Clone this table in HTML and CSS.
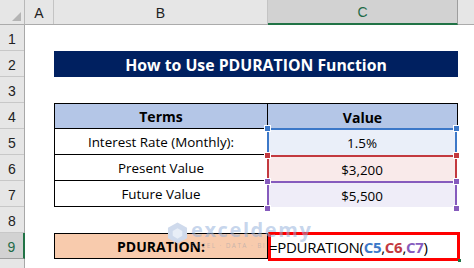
FILE: index.html
```html
<!DOCTYPE html>
<html>
<head>
<meta charset="utf-8">
<link rel="stylesheet" href="styles.css">
</head>
<body>
<div class="sheet">
  <div class="corner"><span class="tri"></span></div>
  <div class="colbar">
    <div class="colhdr col-a">A</div>
    <div class="colhdr col-b">B</div>
    <div class="colhdr col-c sel">C</div>
    <div class="colhdr col-rest"></div>
  </div>
  <div class="rowbar">
    <div class="rowhdr">1</div>
    <div class="rowhdr">2</div>
    <div class="rowhdr">3</div>
    <div class="rowhdr">4</div>
    <div class="rowhdr">5</div>
    <div class="rowhdr">6</div>
    <div class="rowhdr">7</div>
    <div class="rowhdr">8</div>
    <div class="rowhdr sel">9</div>
    <div class="rowhdr last"></div>
  </div>
  <div class="body">
    <div class="title">How to Use PDURATION Function</div>
    <div class="table">
      <div class="cell b head">Terms</div>
      <div class="cell c head">Value</div>
      <div class="cell b">Interest Rate (Monthly):</div>
      <div class="cell c ref r1"><span class="h tl"></span><span class="h tr"></span>1.5%</div>
      <div class="cell b">Present Value</div>
      <div class="cell c ref r2"><span class="h tl"></span><span class="h tr"></span>$3,200</div>
      <div class="cell b">Future Value</div>
      <div class="cell c ref r3"><span class="h tl"></span><span class="h tr"></span><span class="h bl"></span><span class="h br"></span>$5,500</div>
    </div>
    <div class="result">
      <div class="res-label">PDURATION:</div>
      <div class="res-formula"><span class="ftext">=PDURATION(<b class="k1">C5</b>,<b class="k2">C6</b>,<b class="k3">C7</b>)</span><span class="fill"></span></div>
    </div>
    <div class="watermark">
      <svg class="wm-icon" width="21" height="24" viewBox="0 0 22 24">
        <path d="M11 1 L21 6.5 L21 17.5 L11 23 L1 17.5 L1 6.5 Z" fill="#cfdaec"/>
        <path d="M11 7 L16 10 L16 15 L11 18 L6 15 L6 10 Z" fill="#e8eef7"/>
      </svg>
      <div class="wm-text">
        <div class="wm-name">exceldemy</div>
        <div class="wm-sub">EXCEL · DATA · BI</div>
      </div>
    </div>
  </div>
</div>
</body>
</html>
```

FILE: styles.css
```css
* { box-sizing: border-box; }
html, body { margin: 0; padding: 0; background: #ffffff; }
body { width: 474px; height: 268px; overflow: hidden; font-family: "Open Sans", "Liberation Sans", sans-serif; }

.sheet {
  display: grid;
  grid-template-columns: 25px 449px;
  grid-template-rows: 25px 243px;
  width: 474px;
  height: 268px;
}

.corner {
  background: #e6e6e6;
  border-right: 1px solid #b8b8b8;
  border-bottom: 1px solid #ababab;
  position: relative;
}
.tri {
  position: absolute;
  right: 3px;
  bottom: 3px;
  width: 0; height: 0;
  border-left: 9px solid transparent;
  border-bottom: 9px solid #b4b4b4;
}

.colbar {
  display: flex;
  background: #e6e6e6;
  border-bottom: 1px solid #ababab;
}
.colhdr {
  height: 24px;
  display: flex;
  align-items: center;
  justify-content: center;
  font-family: "Liberation Sans", Arial, sans-serif;
  font-size: 14px;
  color: #222;
  border-right: 1px solid #c4c4c4;
  padding-top: 1px;
}
.col-a { width: 29px; }
.col-b { width: 214px; }
.col-c { width: 190px; }
.col-rest { flex: 1; border-right: none; }
.colhdr.sel {
  background: #d2d2d2;
  color: #1e6b48;
  border-bottom: 2px solid #217346;
  border-right: 1px solid #9e9e9e;
  height: 25px;
  margin-bottom: -1px;
}

.rowbar {
  display: flex;
  flex-direction: column;
  background: #e6e6e6;
  border-right: 1px solid #a8a8a8;
}
.rowhdr {
  height: 26px;
  display: flex;
  align-items: center;
  justify-content: center;
  font-family: "Liberation Sans", Arial, sans-serif;
  font-size: 14px;
  color: #222;
  border-bottom: 1px solid #c8c8c8;
  padding-top: 3px;
}
.rowhdr.sel {
  background: #d2d2d2;
  color: #1e6b48;
  margin-right: -1px;
  border-right: 2px solid #217346;
  border-bottom: 1px solid #9e9e9e;
}
.rowhdr.last { flex: 1; border-bottom: none; }

.body {
  display: grid;
  grid-template-columns: 29px 214px 190px 16px;
  grid-template-rows: repeat(9, 26px) 1fr;
  position: relative;
  background: #fff;
}

.title {
  grid-column: 2 / 4;
  grid-row: 2;
  background: #002060;
  color: #fff;
  font-weight: 700;
  font-size: 15.8px;
  display: flex;
  align-items: center;
  justify-content: center;
  padding-top: 1px;
}

.table {
  grid-column: 2 / 4;
  grid-row: 4 / 8;
  display: grid;
  grid-template-columns: 214px 190px;
  grid-template-rows: repeat(4, 26px);
}
.cell {
  display: flex;
  align-items: center;
  justify-content: center;
  font-size: 13.4px;
  color: #000;
  position: relative;
  padding-top: 1px;
}
.cell.b {
  border-left: 1px solid #000;
  border-right: 1px solid #000;
  border-bottom: 1px solid #000;
}
.cell.head {
  background: #b4c6e7;
  font-weight: 700;
  font-size: 14px;
  border-top: 1px solid #000;
}
.cell.c.head {
  border-right: 1px solid #000;
  border-bottom: none;
}
.cell.ref { border-style: solid; border-width: 2px 2px 0 2px; margin-left: -1px; margin-right: 1px; }
.r1 { border-color: #3c78c8; background: #eaeff9; margin-top: -1px; }
.r2 { border-color: #c3393f; background: #f9eaea; }
.r3 { border-color: #865bbd; background: #efedf8; border-bottom-width: 2px; }

.h {
  position: absolute;
  width: 7px;
  height: 7px;
  border: 1px solid #fff;
}
.r1 .h { background: #3c78c8; }
.r2 .h { background: #c3393f; }
.r3 .h { background: #865bbd; }
.h.tl { left: -5px; top: -5px; }
.h.tr { right: -5px; top: -5px; }
.h.bl { left: -5px; bottom: -5px; }
.h.br { right: -5px; bottom: -5px; }

.result {
  grid-column: 2 / 4;
  grid-row: 9;
  display: grid;
  grid-template-columns: 214px 190px;
  position: relative;
}
.res-label {
  background: #f8cbad;
  border: 1px solid #000;
  font-weight: 700;
  font-size: 14px;
  display: flex;
  align-items: center;
  justify-content: center;
  padding-top: 1px;
}
.res-formula {
  position: relative;
  margin: -1px -2px -2px 0;
  border: 3px solid #ff0000;
  display: flex;
  align-items: center;
  font-size: 15px;
  letter-spacing: -0.3px;
  color: #000;
  padding-top: 1px;
  background: #fff;
}
.ftext { margin-left: -2px; }
.res-formula b { font-weight: 700; }
.k1 { color: #3c78c8; }
.k2 { color: #c3393f; }
.k3 { color: #865bbd; }
.fill {
  position: absolute;
  right: -4px;
  bottom: -4px;
  width: 3px;
  height: 3px;
  background: #217346;
}

.watermark {
  grid-column: 2 / 4;
  grid-row: 9;
  align-self: start;
  margin: -12px 0 0 113px;
  display: flex;
  align-items: flex-start;
  gap: 3px;
  pointer-events: none;
  z-index: 2;
  height: 28px;
}
.wm-name {
  font-family: "Open Sans", sans-serif;
  font-weight: 700;
  font-size: 20px;
  line-height: 18px;
  color: rgba(150, 178, 220, 0.55);
  letter-spacing: 1.6px;
}
.wm-sub {
  font-family: "Open Sans", sans-serif;
  font-size: 6.5px;
  line-height: 9px;
  margin-top: 2px;
  letter-spacing: 1.4px;
  color: rgba(140, 150, 168, 0.45);
}
```
